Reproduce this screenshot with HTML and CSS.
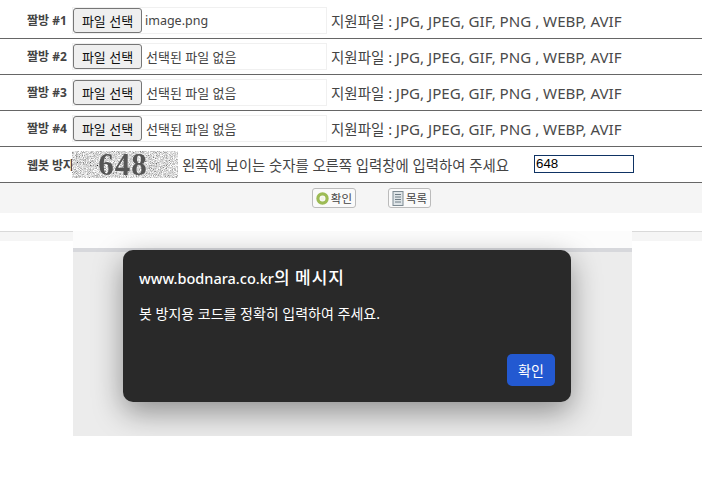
FILE: index.html
```html
<!DOCTYPE html>
<html lang="ko">
<head>
<meta charset="utf-8">
<title>짤방 업로드</title>
<link rel="stylesheet" href="styles.css">
</head>
<body>
<main class="page">
  <form class="form">
    <div class="row">
      <div class="label">짤방 #1</div>
      <div class="file"><span class="file-btn">파일 선택</span><span class="file-name file-name-set">image.png</span></div>
      <div class="hint">지원파일 : <span class="fmt">JPG, JPEG, GIF, PNG , WEBP, AVIF</span></div>
    </div>
    <div class="row">
      <div class="label">짤방 #2</div>
      <div class="file"><span class="file-btn">파일 선택</span><span class="file-name">선택된 파일 없음</span></div>
      <div class="hint">지원파일 : <span class="fmt">JPG, JPEG, GIF, PNG , WEBP, AVIF</span></div>
    </div>
    <div class="row">
      <div class="label">짤방 #3</div>
      <div class="file"><span class="file-btn">파일 선택</span><span class="file-name">선택된 파일 없음</span></div>
      <div class="hint">지원파일 : <span class="fmt">JPG, JPEG, GIF, PNG , WEBP, AVIF</span></div>
    </div>
    <div class="row">
      <div class="label">짤방 #4</div>
      <div class="file"><span class="file-btn">파일 선택</span><span class="file-name">선택된 파일 없음</span></div>
      <div class="hint">지원파일 : <span class="fmt">JPG, JPEG, GIF, PNG , WEBP, AVIF</span></div>
    </div>
    <div class="row row-captcha">
      <div class="label label-captcha">웹봇 방지</div>
      <div class="captcha">
        <svg class="captcha-noise" width="106" height="27" viewBox="0 0 106 27">
          <defs>
            <filter id="noise" x="0" y="0" width="100%" height="100%">
              <feTurbulence type="fractalNoise" baseFrequency="1.3" numOctaves="1" seed="7"/>
              <feColorMatrix type="matrix" values="1.3 1.3 0 0 -0.6  1.3 1.3 0 0 -0.6  1.3 1.3 0 0 -0.6  0 0 0 0 1"/>
            </filter>
          </defs>
          <rect width="106" height="27" filter="url(#noise)"/>
        </svg>
        <span class="captcha-text">648</span>
      </div>
      <div class="captcha-hint">왼쪽에 보이는 숫자를 오른쪽 입력창에 입력하여 주세요</div>
      <input class="captcha-input" type="text" value="648">
    </div>
    <div class="actions">
      <button class="act" type="button">
        <svg width="13" height="13" viewBox="0 0 13 13"><circle cx="6.5" cy="6.5" r="4.6" fill="none" stroke="#9dbb55" stroke-width="3.2"/><circle cx="6.5" cy="6.5" r="1.9" fill="#f2f4e4"/></svg>
        <span>확인</span>
      </button>
      <button class="act" type="button">
        <svg width="12" height="15" viewBox="0 0 12 15"><rect x="1" y="0.5" width="10" height="14" fill="#dfe5e8" stroke="#7d8a92"/><path d="M3 3.5h6M3 6h6M3 8.5h6M3 11h6" stroke="#6f7c85" fill="none"/></svg>
        <span>목록</span>
      </button>
    </div>
  </form>
  <div class="strip"></div>
</main>

<section class="shot">
  <div class="shot-top"></div>
  <div class="shot-rule"></div>
  <div class="dialog" role="alertdialog">
    <h2 class="dialog-title">www.bodnara.co.kr<span class="dialog-title-ko">의 메시지</span></h2>
    <p class="dialog-text">봇 방지용 코드를 정확히 입력하여 주세요.</p>
    <div class="dialog-foot"><button class="dialog-ok" type="button">확인</button></div>
  </div>
</section>
</body>
</html>
```
FILE: styles.css
```css
* { box-sizing: border-box; }

html, body { margin: 0; padding: 0; background: #fff; }

body {
  position: relative;
  width: 702px;
  height: 478px;
  overflow: hidden;
  font-family: "Noto Sans", "Noto Sans CJK KR", sans-serif;
  color: #333;
}

.page { padding-top: 3px; }

.row {
  display: flex;
  align-items: center;
  height: 36px;
  border-bottom: 1px solid #666;
}

.label {
  width: 72px;
  padding: 0 0 2px 27px;
  font-size: 12px;
  font-weight: 700;
  color: #444;
  white-space: nowrap;
}

.label-captcha { padding-bottom: 0; letter-spacing: -0.1px; }

.file {
  display: flex;
  align-items: center;
  width: 255px;
  height: 27px;
  border: 1px solid #f0f0f0;
}

.file-btn {
  display: flex;
  align-items: center;
  justify-content: center;
  width: 69px;
  height: 25px;
  border: 1px solid #767676;
  border-radius: 3px;
  background: #efefef;
  font-size: 13px;
  color: #111;
}

.file-name {
  padding-left: 4px;
  font-size: 13px;
  color: #444;
}

.file-name-set { padding-left: 3px; font-size: 12.5px; }

.hint {
  margin: 0 0 1px 4px;
  font-size: 14.5px;
  color: #444;
  white-space: nowrap;
}

.fmt { font-size: 15.1px; color: #4a4a4a; }

.captcha {
  position: relative;
  display: flex;
  flex: none;
  align-items: center;
  justify-content: center;
  width: 106px;
  height: 27px;
  padding-right: 4px;
  background: #aaa;
}

.captcha-noise { position: absolute; left: 0; top: 0; }

.captcha-text {
  position: relative;
  font-family: "Liberation Serif", serif;
  font-weight: 700;
  font-size: 31px;
  line-height: 27px;
  letter-spacing: 1px;
  color: #555;
  filter: blur(0.5px);
}

.captcha-hint {
  margin: 0 0 1px 4px;
  width: 352px;
  font-size: 14.4px;
  color: #444;
  white-space: nowrap;
}

.captcha-input {
  width: 100px;
  height: 18px;
  margin-bottom: 2px;
  padding: 0 1px;
  border: 1px solid #0f3364;
  border-radius: 0;
  background: #fff;
  font-family: "Liberation Sans", sans-serif;
  font-size: 13.33px;
  color: #000;
  outline: 0;
}

.actions {
  display: flex;
  justify-content: center;
  gap: 32px;
  height: 30px;
  padding: 5px 0 0 41px;
  background: #f5f5f5;
}

.act {
  display: flex;
  align-items: center;
  gap: 2px;
  height: 20px;
  padding: 0 3px;
  border: 1px solid #bbb;
  border-radius: 3px;
  background: #fafafa;
  font-family: inherit;
  font-size: 11.5px;
  color: #444;
}

.strip {
  height: 10px;
  margin-top: 18px;
  border-top: 1px solid #d9d9d9;
  background: #f5f5f5;
}

.shot {
  position: absolute;
  left: 73px;
  top: 231px;
  width: 559px;
  height: 205px;
  background: #ececec;
  overflow: hidden;
}

.shot-top { height: 17px; background: #fcfcfc; }

.shot-rule { height: 4px; background: #d7d8dc; }

.dialog {
  position: absolute;
  left: 50px;
  top: 19px;
  width: 448px;
  height: 152px;
  padding: 18px 16px 16px;
  border-radius: 10px;
  background: #292929;
  box-shadow: 0 10px 30px rgba(0, 0, 0, 0.4);
  color: #fff;
}

.dialog-title {
  margin: 0;
  font-size: 14.5px;
  font-weight: 500;
  line-height: 20px;
}

.dialog-title-ko { font-size: 17px; letter-spacing: 1px; word-spacing: -1px; }

.dialog-text {
  margin: 17px 0 0;
  font-size: 14px;
  line-height: 18px;
}

.dialog-foot {
  position: absolute;
  right: 16px;
  bottom: 16px;
}

.dialog-ok {
  width: 48px;
  height: 32px;
  padding: 0;
  border: 0;
  border-radius: 5px;
  background: #2359d1;
  font-family: inherit;
  font-size: 14px;
  color: #fff;
}
```
